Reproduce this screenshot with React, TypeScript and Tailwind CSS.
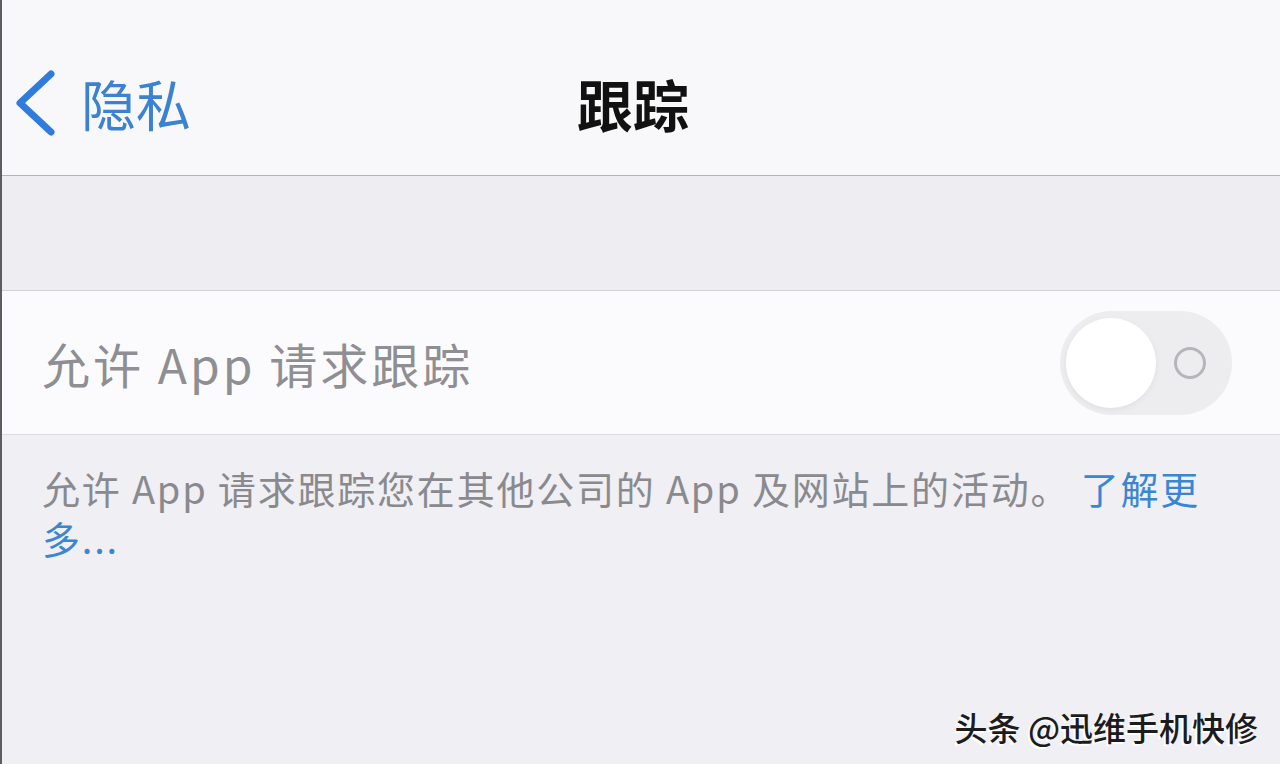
import React from "react";

const font = { fontFamily: '"Noto Sans CJK SC", "Noto Sans", sans-serif' };

export default function App() {
  return (
    <div
      className="relative w-[1280px] h-[764px] overflow-hidden bg-[#efeff4] border-l-2 border-[#5c5c62] flex flex-col"
      style={font}
    >
      {/* Nav bar */}
      <div className="h-[176px] shrink-0 bg-[#f8f8fa] border-b border-[#b4b4b8] grid grid-cols-[1fr_auto_1fr] items-center pt-[30px]">
        <div className="flex items-center pl-[12px]">
          <svg width="44" height="66" viewBox="0 0 44 66" className="shrink-0">
            <path
              d="M37 4 L6 33 L37 62"
              fill="none"
              stroke="#2f7cdc"
              strokeWidth="7"
              strokeLinecap="round"
              strokeLinejoin="round"
            />
          </svg>
          <span className="ml-[23px] text-[55px] leading-none text-[#3b82d0]">隐私</span>
        </div>
        <div className="text-[56px] leading-none font-bold text-[#111111] -translate-x-[8px]">跟踪</div>
        <div />
      </div>

      {/* Gray spacer */}
      <div className="h-[115px] shrink-0 bg-[#eeeef2] border-b border-[#d2d2d6]" />

      {/* Row */}
      <div className="h-[144px] shrink-0 bg-[#fbfbfd] border-b border-[#dcdce0] flex items-center justify-between pl-[40px] pr-[48px]">
        <span className="text-[48px] leading-none tracking-[3px] text-[#8e8e93]">允许 App 请求跟踪</span>
        <div className="w-[172px] h-[104px] rounded-full bg-[#ededf0] flex items-center pl-[6px]">
          <div className="w-[90px] h-[90px] rounded-full bg-white shadow-[0_2px_6px_rgba(0,0,0,0.06)]" />
          <div className="ml-[18px] w-[32px] h-[32px] rounded-full border-[3px] border-[#b6b6ba]" />
        </div>
      </div>

      {/* Footer text */}
      <div className="pl-[40px] pr-[40px] pt-[28px] text-[38px] leading-[50px] tracking-[1.8px] text-[#8a8a8e]">
        允许 App 请求跟踪您在其他公司的 App 及网站上的活动。 <span className="text-[#3b86d2]">了解更</span>
        <br />
        <span className="text-[#3b86d2]">多...</span>
      </div>

      {/* Watermark */}
      <div className="absolute right-[22px] bottom-[20px] text-[33px] leading-none font-medium text-[#1c1c1e] [text-shadow:-2px_2px_0_#ffffff]">
        头条 @迅维手机快修
      </div>
    </div>
  );
}
